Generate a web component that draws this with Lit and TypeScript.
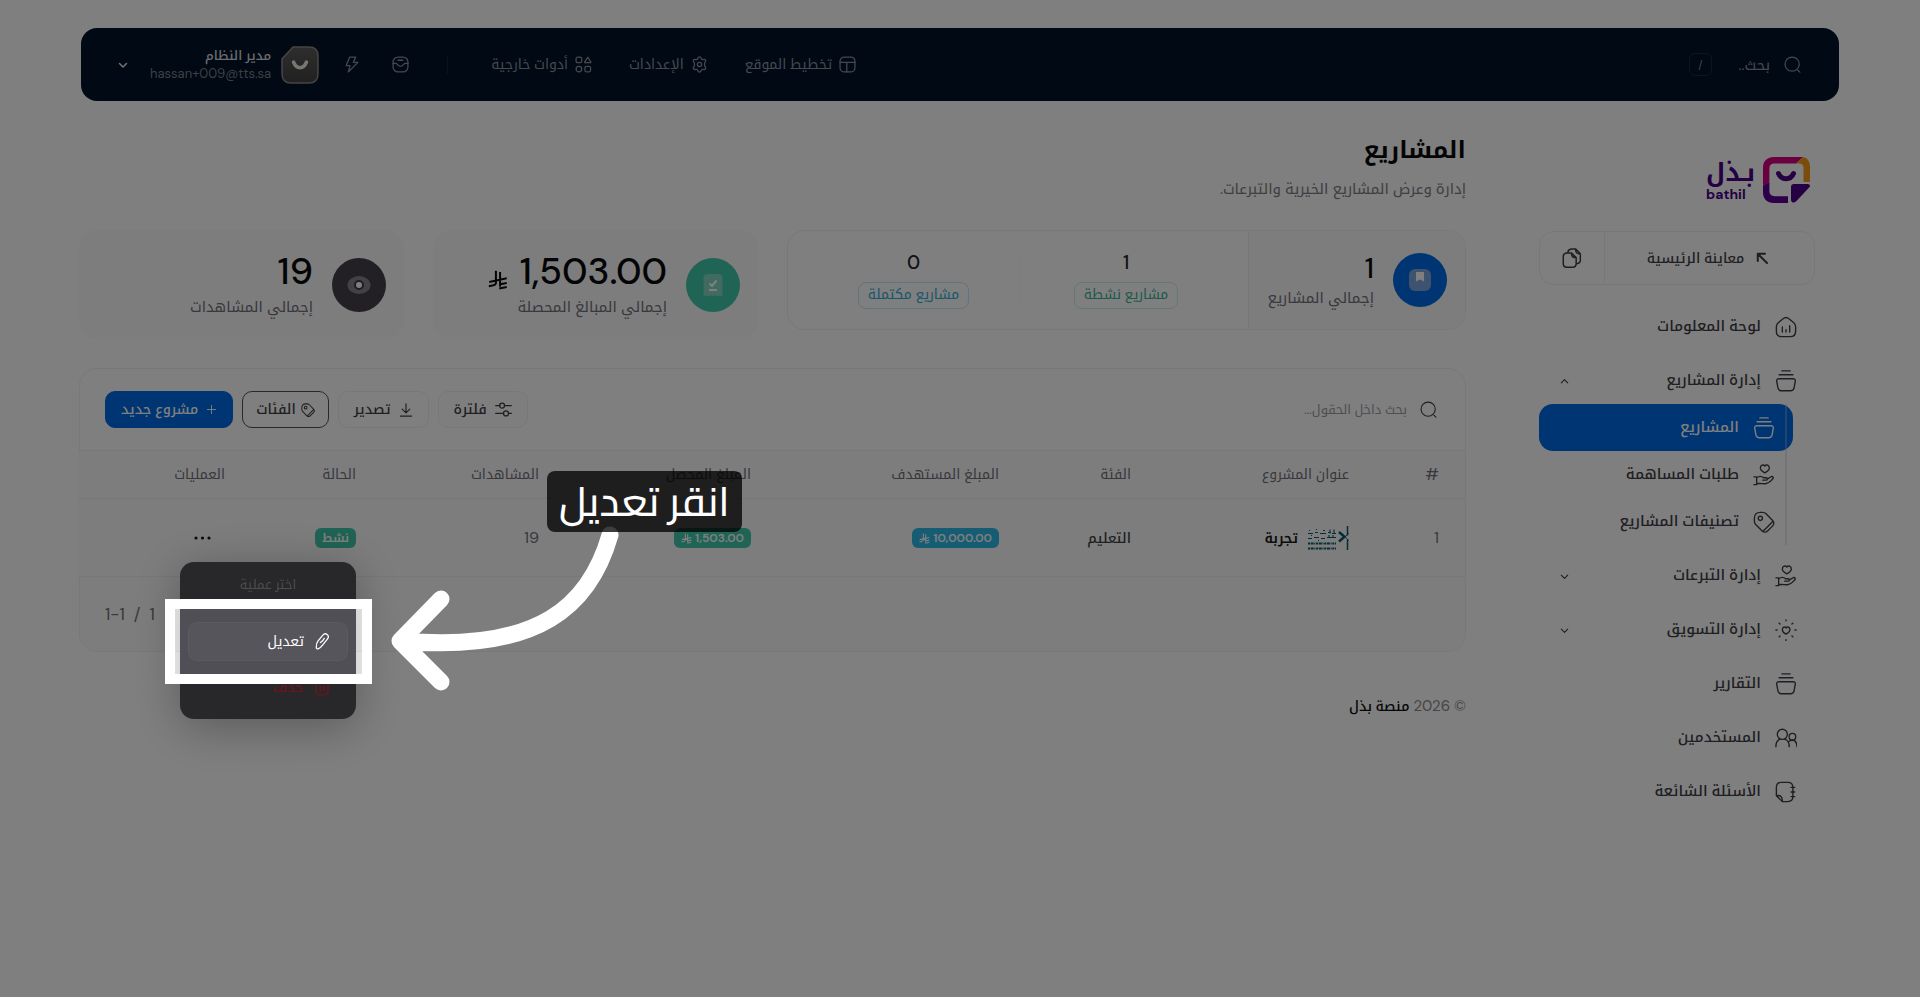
import { LitElement, html, css, svg, nothing } from "lit";
import type { SVGTemplateResult } from "lit";
import { customElement } from "lit/decorators.js";
import { classMap } from "lit/directives/class-map.js";

const icon = (body: SVGTemplateResult, size = 20, width = 1.5) => html`<svg
  class="icon" width=${size} height=${size} viewBox="0 0 24 24" fill="none"
  stroke="currentColor" stroke-width=${width} stroke-linecap="round" stroke-linejoin="round"
  aria-hidden="true">${body}</svg>`;

const I = {
  search: svg`<circle cx="11.5" cy="11.5" r="10"/><path d="M19.5 20 22.5 22.8"/>`,
  layout: svg`<rect x="1.5" y="1.5" width="21" height="21" rx="6"/><path d="M1.5 9h21M11 9v13.5"/>`,
  gear: svg`<circle cx="12" cy="12" r="3"/><path d="M9.500 3.500C10 1.800 10.800 1.300 12 1.300s2 .5 2.500 2.200c.3 1.100 1.600 1.800 2.700 1.500 1.700-.5 2.700-.1 3.300.9.600 1 .4 2.100-.8 3.300-.8.800-.8 4.800 0 5.600 1.200 1.200 1.400 2.300.8 3.300-.6 1-1.600 1.400-3.300.9-1.100-.3-2.400.4-2.700 1.500-.5 1.700-1.300 2.200-2.500 2.200s-2-.5-2.500-2.200c-.3-1.100-1.600-1.800-2.700-1.500-1.700.5-2.700.1-3.300-.9-.6-1-.4-2.100.8-3.300.8-.8.8-4.800 0-5.600-1.200-1.200-1.400-2.300-.8-3.300.6-1 1.600-1.400 3.300-.9 1.100.3 2.400-.4 2.700-1.500z"/>`,
  shapes: svg`<rect x="1.500" y="1.500" width="8" height="8" rx="2.500"/><path d="M18 1.800 22.300 8.200c.4.700 0 1.300-.7 1.300h-7.200c-.7 0-1.100-.6-.7-1.300z"/><circle cx="5.500" cy="18.500" r="4"/><rect x="14" y="14.500" width="8" height="8" rx="2.500"/>`,
  inbox: svg`<rect x="1.500" y="1.500" width="21" height="21" rx="7"/><path d="M1.500 10.500h4c2.200 0 2 4 6.500 4s4.300-4 6.500-4h4M8.500 6h7"/>`,
  bolt: svg`<path d="M9.500 1.500h8.500L14.500 9H21L7.500 22.500 10 13.500H4.500z"/>`,
  down: svg`<path d="m5 9 7 7 7-7"/>`,
  up: svg`<path d="m5 15 7-7 7 7"/>`,
  arrowUpStart: svg`<path d="M22 22 4 4M3.500 18V3.500H18"/>`,
  copy: svg`<path d="M7 5C7.500 2.700 9 1.200 11.500 1.200h5L22 7v7.500c0 2.500-1.300 4-4 4.300M16.500 1.200C16 5 18 7.200 22 7"/><path d="M11.500 6H6C3 6 1.500 7.500 1.500 10.500v8C1.500 21.500 3 23 6 23h6.500c3 0 4.500-1.500 4.500-4.500v-7zM11.500 6c-.3 4 1.500 5.700 5.500 5.500"/>`,
  home: svg`<path d="M1.500 11.500c0-2 .7-3.200 2.300-4.500l5-4c2.200-2 4.200-2 6.400 0l5 4c1.600 1.300 2.300 2.500 2.300 4.500v5c0 4-2 6-6 6h-9c-4 0-6-2-6-6zM8 12v5.500M12 15v2.500M16 10.500v7"/>`,
  bowl: svg`<path d="M7.500 1h9M4.500 5.200h15M4.500 9.500h15c2 0 3 1 2.600 3l-1.300 7c-.4 2.200-1.600 3.200-3.800 3.200H7c-2.200 0-3.400-1-3.800-3.200l-1.300-7c-.4-2 .6-3 2.600-3z"/>`,
  handHeart: svg`<path d="M12.500 9.500c-3-1.800-4.500-3.300-4.500-5.200C8 1.200 11.300.2 12.900 2.200c1.600-2 4.900-1 4.900 2.100 0 1.900-1.600 3.400-4.500 5.200zM1 14h3v8.500H1M4 15c3-2.300 5-2.200 7.500 0h2.800c1.800 0 1.800 2.600 0 2.600H10.500M15.800 16.200l4-2.300c1.900-.9 3 1 1.700 2.400-2.500 3.200-5.300 5-8 5.200-3 .2-6-.8-9.500 0"/>`,
  tag: svg`<path d="M1.500 8C1.500 3.500 3.500 1.500 8 1.500h2.500c1.600 0 2.600.4 3.700 1.500l7 7c2 2 2 4.500 0 6.500l-5 5c-2 2-4.500 2-6.500 0l-7-7C1.800 13.400 1.500 12.500 1.500 11z"/><circle cx="8" cy="8" r="2.300"/><path d="M11 22 21.500 11.500"/>`,
  sun: svg`<path d="M12 16.500c-2.600-1.500-4-2.900-4-4.900 0-2.800 3-3.600 4.300-1.800 1.300-1.800 4-1 4 1.800 0 2-1.700 3.400-4.300 4.900zM12 1v1M12 22.500v1M1 12h1.200M21.800 12H23M4.500 4.500l1 1M18.500 5.500l1-1M4.500 19.500l1-1M18.500 18.500l1 1"/>`,
  users: svg`<circle cx="8" cy="8" r="5.500"/><path d="M1 21.500c0-4.500 2-7.500 5-8.200M10.500 13.300c3 .7 5 3.700 5 8.200"/><circle cx="19" cy="10.500" r="3.600"/><path d="M19 14.500c3 0 4.800 2.500 5 7M15 16c.8-1 2-1.500 4-1.500"/>`,
  note: svg`<path d="M1.500 16V7c0-3.700 1.800-5.500 5.500-5.500h7c3.700 0 5.500 1.800 5.500 5.500v10c0 3.700-1.800 5.500-5.500 5.500H8zM1.500 16c4.500-1 6.800 1.500 6.500 6.500M17.500 7h4M17.500 12h4M17.500 17h4"/>`,
  filter: svg`<path d="M1 6.500h6M14 6.500h9"/><circle cx="10" cy="6.500" r="3.500"/><path d="M1 17.500h11M19.500 17.500H23"/><circle cx="15.500" cy="17.500" r="3.500"/>`,
  download: svg`<path d="M12 1.500V17M5.500 10.500 12 17l6.500-6.500M2.500 22.500h19"/>`,
  plus: svg`<path d="M12 3v18M3 12h18"/>`,
  pen: svg`<path d="M5.500 11.500 12.500 3c1.600-2 4-2.400 6-.8s2.200 4 .6 6l-7 8.800c-1.200 1.500-4.300 5-6.300 5.500-1.600.3-2.600-.6-2.600-2.500 0-2.500.6-6.500 2.300-8.500zM9 13.500c3-1.300 4.500-3.400 5.500-6"/>`,
  trash: svg`<path d="M1.500 5.500h21M4 5.500V17c0 4 1.500 5.500 5.500 5.500h5c4 0 5.500-1.500 5.500-5.500V5.500M8 5c0-2.500 1-3.500 4-3.500S16 2.500 16 5M9.800 11v6M14.200 11v6"/>`,
};

const riyal = (size: number) => html`<svg class="riyal" width=${size} height=${size} viewBox="0 0 24 24"
  fill="none" stroke="currentColor" stroke-width="2.400" role="img" aria-label="ر.س">
  <path d="M9.500 1v14.500c0 1.500-1.500 2.300-3 2.700L1 19.500M14.500 2.500V20M1.500 14.500 22.500 10M13.500 22.300l9-2"/><path d="M22.500 15.500l-8 1.700"/></svg>`;

const navLinks = [
  { text: "تخطيط الموقع", icon: I.layout },
  { text: "الإعدادات", icon: I.gear },
  { text: "أدوات خارجية", icon: I.shapes },
];

type Item = { text: string; icon: SVGTemplateResult; open?: boolean; children?: Item[]; active?: boolean };
const menu: Item[] = [
  { text: "لوحة المعلومات", icon: I.home },
  {
    text: "إدارة المشاريع", icon: I.bowl, open: true,
    children: [
      { text: "المشاريع", icon: I.bowl, active: true },
      { text: "طلبات المساهمة", icon: I.handHeart },
      { text: "تصنيفات المشاريع", icon: I.tag },
    ],
  },
  { text: "إدارة التبرعات", icon: I.handHeart, open: false },
  { text: "إدارة التسويق", icon: I.sun, open: false },
  { text: "التقارير", icon: I.bowl },
  { text: "المستخدمين", icon: I.users },
  { text: "الأسئلة الشائعة", icon: I.note },
];

const columns = ["#", "عنوان المشروع", "الفئة", "المبلغ المستهدف", "المبلغ المحصل", "المشاهدات", "الحالة", "العمليات"];

@customElement("app-root")
export class AppRoot extends LitElement {
  static styles = css`
    :host {
      display: block;
      position: relative;
      overflow: hidden;
      min-height: 100vh;
      box-sizing: border-box;
      padding: 28px 81px;
      direction: rtl;
      background: #fff;
      color: #3f3f46;
      font: 400 14px/20px "DM Sans", "Noto Kufi Arabic", "DejaVu Sans", sans-serif;
    }
    *, *::before { box-sizing: border-box; }
    a { color: inherit; text-decoration: none; }
    button, input { font: inherit; color: inherit; background: none; border: 0; padding: 0; margin: 0; }
    h1, p, ul { margin: 0; padding: 0; }
    ul { list-style: none; }
    input { outline: 0; min-width: 0; }
    .icon, .riyal { flex: none; display: block; }

    .topbar {
      display: flex; align-items: center; height: 73px; padding: 0 38px 0 36px;
      border-radius: 16px; background: #001228; color: #8b929e;
    }
    .search { display: flex; align-items: center; gap: 14px; flex: 1; }
    .search input { width: 44px; font-size: 15px; }
    .search input::placeholder { color: inherit; opacity: 1; }
    kbd {
      display: grid; place-items: center; width: 23px; height: 23px; font: inherit; font-size: 11px;
      border: 1px solid #1c2b40; border-radius: 6px;
    }
    .links { display: flex; gap: 37px; }
    .links a { display: flex; align-items: center; gap: 7px; }
    .links span { padding-bottom: 2px; }
    .rule { width: 1px; height: 19px; margin: 0 43px 0 38px; background: #14253a; }
    .quick { display: flex; align-items: center; gap: 32px; margin-left: 24px; }
    .avatar { display: block; }
    .user { display: flex; align-items: center; gap: 10px; }
    .who { display: grid; line-height: 18px; font-size: 13px; }
    .who strong { font-weight: 500; color: #d8dade; }
    .who span { color: #7a808a; }
    .caret { margin-right: 11px; color: #e8e8ea; }

    .body { display: grid; grid-template-columns: 276px minmax(0, 1fr); gap: 73px; padding: 0 24px 0 0; margin-left: -2px; }
    aside { padding-top: 53px; }
    .brand { display: flex; align-items: center; gap: 8px; height: 52px; margin: 0 5px 25px 0; color: #4a0086; }
    .brand-text { display: grid; justify-items: end; font-weight: 700; }
    .brand-text .ar { font-size: 25px; line-height: 28px; }
    .brand-text .en { font-size: 14px; line-height: 14px; }
    .preview { display: flex; height: 54px; border: 1px solid #f0f0f2; border-radius: 14px; }
    .preview a { flex: 1; display: flex; align-items: center; justify-content: center; gap: 12px; padding-right: 4px; font-weight: 500; }
    .preview button { width: 65px; display: grid; place-items: center; border-right: 1px solid #f0f0f2; }
    .menu { display: grid; gap: 8px; padding-top: 19px; }
    .entry { display: flex; align-items: center; gap: 14px; width: 100%; height: 46px; padding: 0 18px 0 20px; font-size: 15px; font-weight: 500; text-align: right; }
    .entry .label { flex: 1; padding-bottom: 2px; }
    .group .entry + ul { position: relative; padding-right: 22px; }
    .group ul::before { content: ""; position: absolute; top: 0; bottom: 0; right: 28px; width: 2px; background: rgba(190, 190, 200, .35); }
    .group ul .entry { height: 47px; }
    .group ul .entry.active { background: #006ae6; color: #fff; border-radius: 14px; }

    main { padding-top: 33px; }
    h1 { font-size: 24px; line-height: 32px; font-weight: 700; color: #09090b; }
    .lead { margin-top: 11px; font-size: 15px; line-height: 24px; color: #7c7c86; }
    .stats { display: grid; grid-template-columns: 679fr 325fr 325fr; gap: 29px; align-items: start; margin-top: 29px; }
    .card { display: flex; gap: 19px; align-items: center; height: 109px; padding: 0 18px; border-radius: 18px; background: #fbfbfb; }
    .split { display: flex; height: 100px; border: 1px solid #f0f0f2; border-radius: 18px; }
    .total { display: flex; align-items: center; gap: 19px; width: 217px; padding: 0 18px 0 0; background: #fbfbfb; border-left: 1px solid #f0f0f2; border-radius: 0 17px 17px 0; }
    .halves { flex: 1; display: grid; grid-template-columns: 1fr 1fr; align-items: center; padding: 0 16px 0 20px; }
    .half { display: grid; justify-items: center; gap: 7px; }
    .half + .half { border-right: 1px solid #fbfbfc; }
    .half b { font-size: 19px; line-height: 24px; font-weight: 500; color: #27272a; }
    .pill { padding: 0 9px; height: 27px; line-height: 23px; border: 1px solid; border-radius: 8px; font-size: 14px; }
    .pill.green { color: #38b496; border-color: #c9eee4; }
    .pill.cyan { color: #2caeda; border-color: #bfe9f8; }
    .disc { flex: none; width: 54px; height: 54px; border-radius: 50%; display: grid; place-items: center; }
    .disc.blue { background: #006ae6; }
    .disc.green { background: #40c8aa; }
    .disc.dark { background: #444049; }
    .figure { display: grid; gap: 5px; padding-top: 2px; color: #71717a; white-space: nowrap; }
    .figure b { display: flex; align-items: flex-end; gap: 12px; font-size: 37px; line-height: 38px; font-weight: 500; color: #09090b; }
    .figure.small { gap: 2px; padding-top: 4px; }
    .figure.small b { font-size: 28px; line-height: 30px; }
    .figure span { line-height: 24px; font-size: 15px; }

    .panel { margin-top: 29px; border: 1px solid #f0f0f2; border-radius: 18px; }
    .tools { display: flex; align-items: center; height: 81px; padding: 0 28px 0 25px; }
    .find { flex: 1; display: flex; align-items: center; gap: 13px; }
    .find input { width: 240px; font-size: 13px; }
    .find input::placeholder { color: #9c9ca6; opacity: 1; }
    .actions { display: flex; gap: 9px; }
    .actions button { display: flex; align-items: center; gap: 8px; height: 37px; padding: 0 15px; border: 1px solid #f0f0f2; border-radius: 10px; font-weight: 500; }
    .actions span { padding-bottom: 2px; }
    .actions .soft { background: #fcfcfc; }
    .actions .outline { border-color: #52525b; gap: 5px; padding: 0 13px; }
    .actions .primary { background: #006ae6; border-color: #006ae6; color: #fff; }

    table { width: 100%; border-collapse: collapse; table-layout: fixed; background: #fbfbfb; }
    th, td { padding: 0 26px 0 0; text-align: right; border-top: 1px solid #efeff1; border-bottom: 1px solid #efeff1; }
    th { height: 48px; padding-bottom: 2px; font-weight: 400; color: #71717a; }
    th:first-child { font-size: 17px; }
    td { height: 78px; }
    .c0 { width: 90px; } .c1 { width: 218px; } .c2 { width: 132px; } .c3 { width: 248px; }
    .c4 { width: 212px; } .c5 { width: 183px; } .c6 { width: 131px; } .c7 { width: 173px; }
    .muted { color: #71717a; font-size: 16px; }
    .project { display: flex; align-items: center; gap: 9px; font-weight: 600; color: #18181b; }
    .category { font-weight: 500; }
    .badge { display: inline-flex; align-items: center; gap: 3px; height: 20px; padding: 0 7px; border-radius: 6px; font-size: 12px; font-weight: 600; color: #fff; vertical-align: middle; }
    .badge.cyan { background: #2cbae8; }
    .badge.green { background: #40c8aa; }
    .dropdown { position: relative; display: block; width: 17px; margin-right: 14px; color: #18181b; }
    .dropdown > button { display: block; }
    .sheet {
      position: absolute; left: -14px; top: 32px; width: 176px; height: 157px; padding: 8px; border-radius: 14px;
      background: #504f55; color: #fff; box-shadow: 0 8px 48px rgba(0, 0, 0, .3);
    }
    .sheet p { line-height: 30px; margin-bottom: 22px; text-align: center; font-size: 13px; color: #98979e; }
    .sheet button { display: flex; align-items: center; gap: 10px; width: 100%; height: 39px; margin-bottom: 7px; padding: 0 16px; border: 1px solid transparent; border-radius: 9px; }
    .sheet .edit { background: #57555c; border-color: #5c5a61; }
    .sheet .delete { color: #e02832; }
    .pager { display: flex; justify-content: flex-end; align-items: center; height: 74px; padding: 0 25px; font-size: 17px; color: #71717a; background: #fbfbfb; border-radius: 0 0 17px 17px; }
    .pager span { direction: ltr; white-space: pre; }
    footer { margin-top: 42px; line-height: 24px; font-size: 15px; color: #8a8a92; }
    footer a { color: #09090b; font-weight: 500; font-size: 14px; }

    .spot { position: absolute; left: 165px; top: 599px; width: 207px; height: 85px; border: 10px solid #fff; box-shadow: 0 0 0 4000px rgba(0, 0, 0, .5); pointer-events: none; }
    .pointer { position: absolute; left: 380px; top: 520px; pointer-events: none; }
    .tip { position: absolute; left: 547px; top: 471px; height: 61px; padding: 0 12px; border-radius: 8px; background: rgba(0, 0, 0, .76); color: #fff; font: 500 41px/61px "Cairo", "Noto Kufi Arabic", sans-serif; }
  `;

  private entry(item: Item): unknown {
    const expandable = item.open !== undefined;
    const inner = html`${icon(item.icon, 22)}<span class="label">${item.text}</span>
      ${expandable ? icon(item.open ? I.up : I.down, 11, 2.4) : nothing}`;
    return html`<li class=${classMap({ group: !!item.children })}>
      ${expandable
        ? html`<button class="entry" aria-expanded=${String(item.open)}>${inner}</button>`
        : html`<a href="#" class=${classMap({ entry: true, active: !!item.active })}>${inner}</a>`}
      ${item.children ? html`<ul>${item.children.map((c) => this.entry(c))}</ul>` : nothing}
    </li>`;
  }

  private topbar() {
    return html`<header class="topbar">
      <label class="search">${icon(I.search, 17, 1.8)}
        <input type="text" placeholder="بحث.." aria-label="بحث" /><kbd>/</kbd>
      </label>
      <nav class="links">${navLinks.map((l) => html`<a href="#">${icon(l.icon, 17, 1.8)}<span>${l.text}</span></a>`)}</nav>
      <span class="rule"></span>
      <div class="quick">
        <button aria-label="الوارد">${icon(I.inbox, 17, 1.8)}</button>
        <button aria-label="إجراءات سريعة">${icon(I.bolt, 17, 1.8)}</button>
      </div>
      <div class="user">
        <svg class="avatar" width="38" height="38" viewBox="0 0 38 38" aria-hidden="true">
          <defs><linearGradient id="av" x1="0" y1="0" x2="0" y2="1"><stop offset="0" stop-color="#5c5c5c"/><stop offset="1" stop-color="#424242"/></linearGradient></defs>
          <path d="M12 1h16c6 0 9 3 9 9v18c0 6-3 9-9 9H10c-6 0-9-3-9-9V13z" fill="url(#av)" stroke="#8e8a86" stroke-width="1.500" stroke-linejoin="round"/>
          <path d="M12.500 16c3 7.500 10 7.500 13 0" fill="none" stroke="#f4ece0" stroke-width="3.500" stroke-linecap="round"/>
        </svg>
        <div class="who"><strong>مدير النظام</strong><span dir="ltr">hassan+009@tts.sa</span></div>
        <button class="caret" aria-label="قائمة المستخدم">${icon(I.down, 12, 3)}</button>
      </div>
    </header>`;
  }

  private sidebar() {
    return html`<aside>
      <a href="#" class="brand">
        <svg width="47" height="46" viewBox="0 0 47 46" aria-hidden="true">
          <path d="M0 28.500V11C0 4 4 0 11 0h29l-7 6.400H11.500c-3.400 0-5.100 1.700-5.100 5.100V25z" fill="#d4007f"/>
          <path d="M33 6.400 40 0c4.500.8 7 4.500 7 9.500V25h-6.500V11c0-3-1.500-4.600-4.500-4.600z" fill="#f59a18"/>
          <path d="M0 28.500 6.400 25v9c0 3.400 1.800 5.200 5.200 5.200H25V46H11C4 46 0 42 0 35z" fill="#5a0092"/>
          <path d="M15.500 16.500c3 7 12 7 15 0" fill="none" stroke="#4a0086" stroke-width="5" stroke-linecap="round"/>
          <path d="M31 27h13.500c2.500 0 3.200 2 1.600 3.600L33 44.500c-2 2-5 1-5-1.500V30c0-2 1-3 3-3z" fill="#4a0086"/>
        </svg>
        <span class="brand-text"><span class="ar">بـذل</span><span class="en">bathil</span></span>
      </a>
      <div class="preview">
        <a href="#">${icon(I.arrowUpStart, 12, 4)}معاينة الرئيسية</a>
        <button aria-label="نسخ الرابط">${icon(I.copy, 20, 1.8)}</button>
      </div>
      <nav><ul class="menu">${menu.map((m) => this.entry(m))}</ul></nav>
    </aside>`;
  }

  private stats() {
    return html`<section class="stats">
      <div class="split">
        <div class="total">
          <span class="disc blue"><svg width="24" height="24" viewBox="0 0 24 24"><rect x="1" y="1" width="22" height="22" rx="6" fill="#7ba6e0"/><path d="M8 4h8v9.500L12 11.500l-4 2z" fill="#fff"/></svg></span>
          <div class="figure small"><b>1</b><span>إجمالي المشاريع</span></div>
        </div>
        <div class="halves">
          <div class="half"><b>1</b><span class="pill green">مشاريع نشطة</span></div>
          <div class="half"><b>0</b><span class="pill cyan">مشاريع مكتملة</span></div>
        </div>
      </div>
      <div class="card">
        <span class="disc green"><svg width="22" height="24" viewBox="0 0 22 24"><path d="M1.500 5C1.500 2.500 3 1 5.500 1h11c2.500 0 4 1.500 4 4v18c-3-1-4 .5-6 0-1.500-.6-2.500-.6-3.500.5-1-1.100-2-1.100-3.500-.5-2 .5-3-1-6 0z" fill="#82d5c2"/><path d="m7.500 10.500 2.500 2.500 4.500-5.500M7 17h8" fill="none" stroke="#fff" stroke-width="2"/></svg></span>
        <div class="figure"><b>1,503.00 ${riyal(20)}</b><span>إجمالي المبالغ المحصلة</span></div>
      </div>
      <div class="card">
        <span class="disc dark"><svg width="24" height="20" viewBox="0 0 24 20"><ellipse cx="12" cy="10" rx="11.500" ry="9" fill="#85828a"/><circle cx="12" cy="10" r="4" fill="#fff" stroke="#3c3942" stroke-width="2"/></svg></span>
        <div class="figure"><b>19</b><span>إجمالي المشاهدات</span></div>
      </div>
    </section>`;
  }

  private table() {
    return html`<section class="panel">
      <div class="tools">
        <label class="find">${icon(I.search, 17, 1.6)}<input type="text" placeholder="بحث داخل الحقول..." aria-label="بحث داخل الحقول" /></label>
        <div class="actions">
          <button class="soft">${icon(I.filter, 17, 1.8)}<span>فلترة</span></button>
          <button>${icon(I.download, 14, 2)}<span>تصدير</span></button>
          <button class="outline">${icon(I.tag, 14, 1.8)}<span>الفئات</span></button>
          <button class="primary">${icon(I.plus, 11, 2)}<span>مشروع جديد</span></button>
        </div>
      </div>
      <table>
        <colgroup>${columns.map((_, i) => html`<col class="c${i}" />`)}</colgroup>
        <thead><tr>${columns.map((c) => html`<th scope="col">${c}</th>`)}</tr></thead>
        <tbody><tr>
          <td class="muted">1</td>
          <td><span class="project">
            <svg width="42" height="24" viewBox="0 0 42 24" fill="none" stroke="#0c5a6c" aria-hidden="true">
              <path d="M40.500 0v9.500M40.500 13.500V24" stroke-width="1.500"/><path d="M32 6l5.500 4.800L32 15.500" stroke-width="2.500"/><path d="m38 10.800 4-4M38 10.800l4 4" stroke-width="1"/>
              <path d="M1 7.500h5M8 6.500h3M13 7.500h6M21 6.500h3M25 7.500h4M2 4.500h1M9 3.500h1M16 4.500h2M23 3.500v4M27 3.500v4M1 12.500h4M7 11.500h5M14 12.500h4M20 11.500h9M4 9.500h1M11 14.500h1M22 9v3M26 9v3" stroke-width="1.100"/>
              <path d="M1 17.500h28M1 22.500h28" stroke-width="2.200" stroke-dasharray="2 .7 3 .7 1 .7"/>
            </svg>تجربة</span></td>
          <td class="category">التعليم</td>
          <td><span class="badge cyan">10,000.00 ${riyal(11)}</span></td>
          <td><span class="badge green">1,503.00 ${riyal(11)}</span></td>
          <td class="muted">19</td>
          <td><span class="badge green">نشط</span></td>
          <td><div class="dropdown">
            <button aria-label="العمليات"><svg class="icon" width="17" height="16" viewBox="0 0 17 16" fill="currentColor"><circle cx="2" cy="8" r="1.600"/><circle cx="8.500" cy="8" r="1.600"/><circle cx="15" cy="8" r="1.600"/></svg></button>
            <div class="sheet">
              <p>اختر عملية</p>
              <button class="edit">${icon(I.pen, 17, 1.8)}تعديل</button>
              <button class="delete">${icon(I.trash, 18, 1.8)}حذف</button>
            </div>
          </div></td>
        </tr></tbody>
      </table>
      <div class="pager"><span>1-1  /  1</span></div>
    </section>`;
  }

  render() {
    return html`${this.topbar()}
      <div class="body">
        ${this.sidebar()}
        <main>
          <h1>المشاريع</h1>
          <p class="lead">إدارة وعرض المشاريع الخيرية والتبرعات.</p>
          ${this.stats()} ${this.table()}
          <footer>© 2026 <a href="#">منصة بذل</a></footer>
        </main>
      </div>
      <div class="spot"></div>
      <svg class="pointer" width="250" height="180" viewBox="0 0 250 180" fill="none" stroke="#fff" stroke-width="17" stroke-linecap="round" stroke-linejoin="round" aria-hidden="true">
        <path d="M230 15C210 85 160 133 22 121M61 79 20 121l41 41"/>
      </svg>
      <div class="tip">انقر تعديل</div>`;
  }
}
